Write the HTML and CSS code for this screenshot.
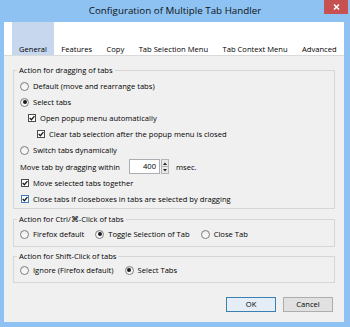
FILE: index.html
```html
<!DOCTYPE html>
<html lang="en">
<head>
    <meta charset="UTF-8">
    <title>Configuration of Multiple Tab Handler</title>
    <link rel="stylesheet" href="styles.css">
</head>
<body>
    <div class="window">
        <div class="titlebar">
            <span></span>
            <div class="title">Configuration of Multiple Tab Handler</div>
            <button class="close" type="button">
                <svg width="7" height="6" viewBox="0 0 7 6"><path d="M1 0.5 L6 5.5 M6 0.5 L1 5.5" stroke="#fff" stroke-width="1.5"/></svg>
            </button>
        </div>
        <div class="client">
            <div class="tabs">
                <div class="tab active">General</div>
                <div class="tab">Features</div>
                <div class="tab">Copy</div>
                <div class="tab">Tab Selection Menu</div>
                <div class="tab">Tab Context Menu</div>
                <div class="tab">Advanced</div>
            </div>
            <div class="panel">
                <fieldset class="group g-drag">
                    <legend>Action for dragging of tabs</legend>
                    <div class="opt"><span class="radio"></span>Default (move and rearrange tabs)</div>
                    <div class="opt"><span class="radio on"></span>Select tabs</div>
                    <div class="opt lvl1"><span class="check"><svg width="6" height="6" viewBox="0 0 6 6"><path d="M0.7 3 L2.4 4.7 L5.4 1.1"/></svg></span>Open popup menu automatically</div>
                    <div class="opt lvl2"><span class="check"><svg width="6" height="6" viewBox="0 0 6 6"><path d="M0.7 3 L2.4 4.7 L5.4 1.1"/></svg></span>Clear tab selection after the popup menu is closed</div>
                    <div class="opt"><span class="radio"></span>Switch tabs dynamically</div>
                    <div class="opt spin-row">Move tab by dragging within
                        <span class="num">400</span>
                        <span class="spin">
                            <span class="spin-btn"><svg width="4" height="3" viewBox="0 0 4 3"><path d="M0 3 L2 0.5 L4 3Z"/></svg></span>
                            <span class="spin-btn"><svg width="4" height="3" viewBox="0 0 4 3"><path d="M0 0 L2 2.5 L4 0Z"/></svg></span>
                        </span>
                        <span class="unit">msec.</span>
                    </div>
                    <div class="opt"><span class="check"><svg width="6" height="6" viewBox="0 0 6 6"><path d="M0.7 3 L2.4 4.7 L5.4 1.1"/></svg></span>Move selected tabs together</div>
                    <div class="opt"><span class="check focus"><svg width="6" height="6" viewBox="0 0 6 6"><path d="M0.7 3 L2.4 4.7 L5.4 1.1"/></svg></span>Close tabs if closeboxes in tabs are selected by dragging</div>
                </fieldset>

                <fieldset class="group g-ctrl">
                    <legend>Action for Ctrl/⌘-Click of tabs</legend>
                    <div class="opt-line">
                        <div class="opt"><span class="radio"></span>Firefox default</div>
                        <div class="opt"><span class="radio on"></span>Toggle Selection of Tab</div>
                        <div class="opt"><span class="radio"></span>Close Tab</div>
                    </div>
                </fieldset>

                <fieldset class="group g-shift">
                    <legend>Action for Shift-Click of tabs</legend>
                    <div class="opt-line">
                        <div class="opt"><span class="radio"></span>Ignore (Firefox default)</div>
                        <div class="opt"><span class="radio on"></span>Select Tabs</div>
                    </div>
                </fieldset>

                <div class="buttons">
                    <button class="btn default" type="button">OK</button>
                    <button class="btn" type="button">Cancel</button>
                </div>
            </div>
        </div>
    </div>
</body>
</html>
```

FILE: styles.css
```css
* { box-sizing: border-box; }
html, body { margin: 0; }
body { width: 350px; height: 327px; font-family: "Open Sans", "Segoe UI", sans-serif; color: #000; overflow: hidden; }

.window { width: 350px; height: 327px; background: #8ec2f3; display: flex; flex-direction: column; }

/* title bar */
.titlebar { height: 22px; flex: none; display: grid; grid-template-columns: 1fr auto 1fr; align-items: start; }
.title { font-size: 9.8px; line-height: 22px; color: #111; white-space: nowrap; }
.close { justify-self: end; width: 24px; height: 14px; margin-right: 2px; padding: 0; border: 0; background: #c75050; display: flex; align-items: center; justify-content: center; }
.close svg { display: block; }

/* client area */
.client { flex: 1; margin: 0 6px 5px 4px; background: #f0f0f0; display: flex; flex-direction: column; }

.tabs { height: 34px; flex: none; background: #fff; border-bottom: 1px solid #dadada; display: flex; padding-left: 7.8px; }
.tab { padding: 0 7.2px; display: flex; align-items: flex-end; font-size: 7.6px; line-height: 12px; white-space: nowrap; }
.tab.active { background: #c6d7ee; }

.panel { flex: 1; display: flex; flex-direction: column; padding: 8px 9px 10px 9px; }

/* group boxes */
.group { margin: 0; padding: 0 6px; border: 1px solid #d6d6d6; min-width: 0; }
.group legend { padding: 0 2px; margin-left: -3px; font-size: 7.6px; line-height: 12px; white-space: nowrap; }
.g-drag { padding-top: 2px; padding-bottom: 1px; }
.g-ctrl { margin-top: 4px; padding-top: 1px; padding-bottom: 4px; }
.g-shift { margin-top: 3px; padding-bottom: 4px; }

.opt { display: flex; align-items: center; height: 16px; font-size: 7.6px; white-space: nowrap; }
.opt.lvl1 { padding-left: 7px; }
.opt.lvl2 { padding-left: 16px; }
.opt-line { display: flex; gap: 11px; }

.radio { width: 9px; height: 9px; flex: none; margin-right: 4px; border-radius: 50%; border: 1px solid #7d7d7d; background: linear-gradient(#ececec, #fdfdfd); display: flex; align-items: center; justify-content: center; }
.radio.on::after { content: ""; width: 4px; height: 4px; border-radius: 50%; background: #1c1c1c; }

.check { width: 8px; height: 8px; flex: none; margin: 0 4px 0 1px; border: 1px solid #4a4a4a; background: #fff; display: flex; align-items: center; justify-content: center; }
.check.focus { border-color: #3d7ebf; }
.check svg { display: block; }
.check path { fill: none; stroke: #1a1a1a; stroke-width: 1.3; }

/* number input with spinner */
.spin-row { height: 17px; }
.num { width: 31px; height: 15px; margin-left: 9px; padding-right: 3px; border: 1px solid #abadb3; background: #fff; text-align: right; line-height: 13px; }
.spin { width: 8px; height: 15px; margin-left: 1px; display: flex; flex-direction: column; }
.spin-btn { flex: 1; border: 1px solid #b5b5b5; background: #e8e8e8; display: flex; align-items: center; justify-content: center; }
.spin-btn + .spin-btn { border-top: 0; }
.spin-btn svg { display: block; fill: #222; }
.unit { margin-left: 7px; }

/* dialog buttons */
.buttons { margin-top: auto; display: flex; justify-content: flex-end; gap: 7px; padding-right: 2px; }
.btn { width: 50px; height: 15px; padding: 0; font-family: inherit; font-size: 7.6px; line-height: 13px; color: #000; border: 1px solid #adadad; background: #e1e1e1; }
.btn.default { border-color: #3c7fb1; background: #e5eef7; }
```
